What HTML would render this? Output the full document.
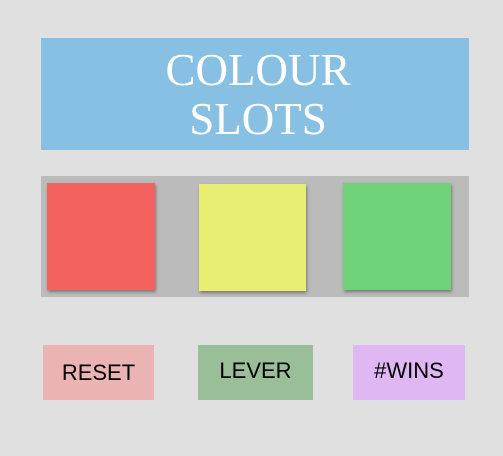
<!DOCTYPE html>
<html><head><style>
body{margin:0;width:503px;height:456px;background:#e0e0e0;position:relative;overflow:hidden;font-family:"Liberation Sans",sans-serif}
.a{position:absolute}
.title{left:41px;top:38px;width:428px;height:112px;background:#88c0e4;color:#fff;font-family:"Liberation Serif",serif;font-size:45px;line-height:49px;text-align:center;padding-top:8px;box-sizing:border-box;padding-left:6px}
.tray{left:41px;top:176px;width:428px;height:121px;background:#bbbbbb}
.sq{width:108px;height:107px;box-shadow:1px 2px 3px rgba(0,0,0,.35)}
.btn{top:345px;height:55px;font-size:22px;line-height:55px;text-align:center;color:#000}
</style></head><body>
<div class="a title">COLOUR<br>SLOTS</div>
<div class="a tray"></div>
<div class="a sq" style="left:47px;top:183px;background:#f46260"></div>
<div class="a sq" style="left:199px;top:184px;width:107px;background:#e8ee72"></div>
<div class="a sq" style="left:343px;top:183px;background:#6fd278"></div>
<div class="a btn" style="left:43px;width:111px;background:#ebb3b3;line-height:56px">RESET</div>
<div class="a btn" style="left:198px;width:115px;background:#9abf98;line-height:51px">LEVER</div>
<div class="a btn" style="left:353px;width:112px;background:#dfb8f3;line-height:51px">#WINS</div>
</body></html>
